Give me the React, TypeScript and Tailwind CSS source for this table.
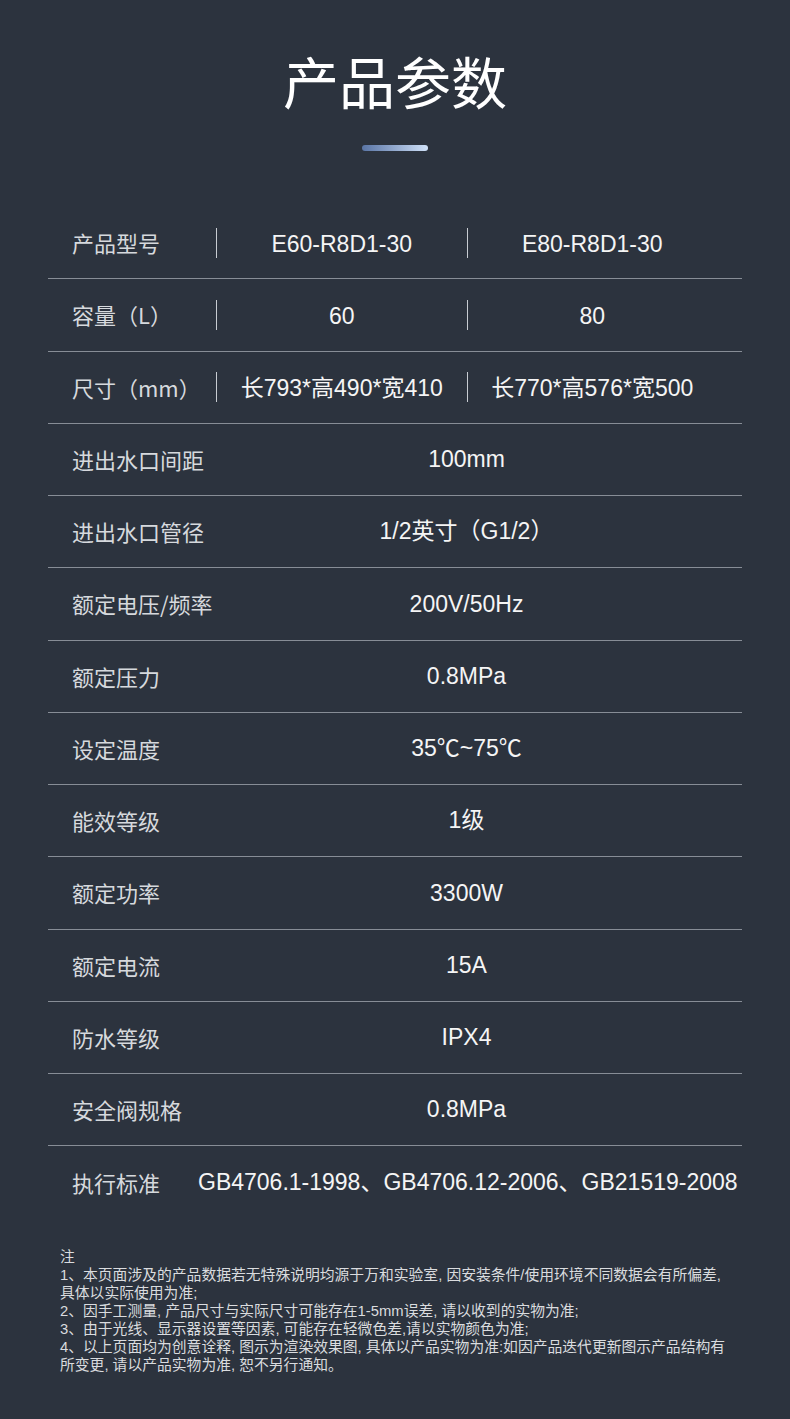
const rows: { label: string; values: string[] }[] = [
  { label: "产品型号", values: ["E60-R8D1-30", "E80-R8D1-30"] },
  { label: "容量（L）", values: ["60", "80"] },
  { label: "尺寸（mm）", values: ["长793*高490*宽410", "长770*高576*宽500"] },
  { label: "进出水口间距", values: ["100mm"] },
  { label: "进出水口管径", values: ["1/2英寸（G1/2）"] },
  { label: "额定电压/频率", values: ["200V/50Hz"] },
  { label: "额定压力", values: ["0.8MPa"] },
  { label: "设定温度", values: ["35℃~75℃"] },
  { label: "能效等级", values: ["1级"] },
  { label: "额定功率", values: ["3300W"] },
  { label: "额定电流", values: ["15A"] },
  { label: "防水等级", values: ["IPX4"] },
  { label: "安全阀规格", values: ["0.8MPa"] },
];

const notes: string[][] = [
  ["注"],
  ["1、本页面涉及的产品数据若无特殊说明均源于万和实验室, 因安装条件/使用环境不同数据会有所偏差,", "具体以实际使用为准;"],
  ["2、因手工测量, 产品尺寸与实际尺寸可能存在1-5mm误差, 请以收到的实物为准;"],
  ["3、由于光线、显示器设置等因素, 可能存在轻微色差,请以实物颜色为准;"],
  ["4、以上页面均为创意诠释, 图示为渲染效果图, 具体以产品实物为准:如因产品迭代更新图示产品结构有", "所变更, 请以产品实物为准, 恕不另行通知。"],
];

const cjk = "font-['Noto_Sans_CJK_SC',sans-serif]";
const num = "font-['Liberation_Sans','Noto_Sans_CJK_SC',sans-serif]";

function Divider() {
  return <div className="h-[30px] w-px shrink-0 bg-[#c8ccd2]" />;
}

export default function App() {
  return (
    <div className="h-[1419px] w-[790px] overflow-hidden bg-[#2c333e]">
      <div className="flex flex-col items-center pt-[52px]">
        <h1 className={`${cjk} text-[56px] font-normal leading-[56px] text-white`}>产品参数</h1>
        <div className="mt-[37px] h-[6px] w-[66px] rounded-full bg-linear-to-r from-[#5a75a5] to-[#d0e1f8]" />
      </div>

      <div className="mx-[48px] mt-[56px]">
        {rows.map((row) => (
          <div key={row.label} className="flex h-[72.25px] items-center border-b border-[#878d96]">
            <div className={`${cjk} w-[168px] shrink-0 pl-[24px] text-[22px] text-[#d6d9dd]`}>{row.label}</div>
            {row.values.length === 2 ? (
              <>
                <Divider />
                <div className={`${num} flex-1 pt-[3px] text-center text-[23px] text-[#f5f5f5]`}>{row.values[0]}</div>
                <Divider />
                <div className={`${num} flex-1 pt-[3px] text-center text-[23px] text-[#f5f5f5]`}>{row.values[1]}</div>
              </>
            ) : (
              <div className={`${num} flex-1 text-center text-[23px] text-[#f5f5f5]`}>{row.values[0]}</div>
            )}
            <div className="w-[25px] shrink-0" />
          </div>
        ))}
        <div className="flex h-[72px] items-center">
          <div className={`${cjk} w-[150px] shrink-0 pl-[24px] text-[22px] text-[#d6d9dd]`}>执行标准</div>
          <div className={`${num} whitespace-nowrap text-[23px] text-[#f5f5f5]`}>
            GB4706.1-1998、GB4706.12-2006、GB21519-2008
          </div>
        </div>
      </div>

      <div className={`${num} mt-[30px] px-[60px] text-[14.8px] leading-[18px] text-[#dadcdf]`}>
        {notes.map((p, i) => (
          <div key={i}>
            {p.map((line) => (
              <div key={line} className="whitespace-nowrap">
                {line}
              </div>
            ))}
          </div>
        ))}
      </div>
    </div>
  );
}
